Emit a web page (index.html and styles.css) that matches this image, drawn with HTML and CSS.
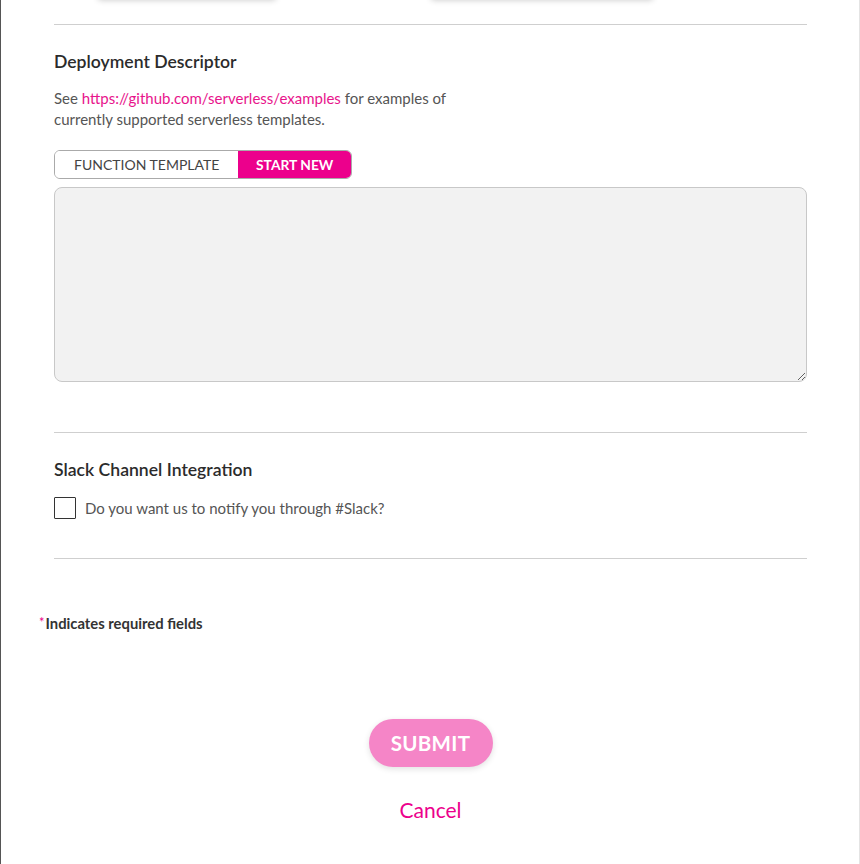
FILE: index.html
```html
<!DOCTYPE html>
<html>
<head>
<meta charset="utf-8">
<link rel="stylesheet" href="styles.css">
</head>
<body>
<div class="frame">
  <div class="cards">
    <div class="card card-a"></div>
    <div class="card card-b"></div>
  </div>
  <div class="section">
    <hr class="divider">
    <h2 class="heading">Deployment Descriptor</h2>
    <p class="desc">See <a class="link" href="#">https://github.com/serverless/examples</a> for examples of<br>currently supported serverless templates.</p>
    <div class="tabs">
      <button class="tab">FUNCTION TEMPLATE</button>
      <button class="tab tab-active">START NEW</button>
    </div>
    <textarea class="editor"></textarea>
    <hr class="divider divider-2">
    <h2 class="heading heading-slack">Slack Channel Integration</h2>
    <label class="check-row"><span class="checkbox"></span><span class="check-label">Do you want us to notify you through #Slack?</span></label>
    <hr class="divider divider-3">
  </div>
  <p class="required"><span class="star">*</span>Indicates required fields</p>
  <div class="actions">
    <button class="submit">SUBMIT</button>
    <a class="cancel" href="#">Cancel</a>
  </div>
</div>
</body>
</html>
```

FILE: styles.css
```css
html, body {
  margin: 0;
  padding: 0;
  background: #fff;
  height: 864px;
  overflow: hidden;
}
.frame {
  box-sizing: border-box;
  width: 860px;
  height: 864px;
  border-left: 1px solid #555;
  border-right: 1px solid #e4e4e4;
  font-family: Lato, "Open Sans", sans-serif;
  color: #333;
}
.cards {
  display: flex;
  height: 0;
  overflow: visible;
}
.card {
  height: 40px;
  margin-top: -41px;
  background: #fff;
  box-shadow: 0 1px 6px rgba(0,0,0,0.22);
  border-radius: 3px;
}
.card-a { width: 178px; margin-left: 97px; }
.card-b { width: 222px; margin-left: 155px; }
.section {
  padding: 0 52px 0 53px;
}
.divider {
  border: 0;
  border-top: 1px solid #cfcfcf;
  margin: 24px 0 0;
  height: 0;
}
.heading {
  margin: 26px 0 0;
  font-size: 17.6px;
  font-weight: 600;
  color: #2b2b2b;
  line-height: 22px;
}
.desc {
  margin: 15px 0 0;
  font-size: 15px;
  line-height: 21px;
  color: #555;
}
.link {
  color: #e8148c;
  text-decoration: none;
}
.tabs {
  display: flex;
  margin-top: 20px;
  width: 298px;
  height: 29px;
  border: 1px solid #aaa;
  border-radius: 6px;
  box-sizing: border-box;
  overflow: hidden;
}
.tab {
  font-family: Lato, sans-serif;
  font-size: 14px;
  border: 0;
  background: #fff;
  color: #444;
  padding: 0;
  height: 100%;
  width: 184px;
}
.tab-active {
  width: 113px;
  background: #ec008c;
  color: #fff;
  font-weight: 700;
  font-size: 13.8px;
}
.editor {
  display: block;
  box-sizing: border-box;
  width: 100%;
  height: 195px;
  margin-top: 8px;
  background: #f2f2f2;
  border: 1px solid #c8c8c8;
  border-radius: 8px;
  resize: vertical;
}
.divider-2 { margin-top: 50px; }
.heading-slack { margin-top: 26px; }
.check-row {
  display: flex;
  align-items: center;
  margin-top: 16px;
}
.checkbox {
  width: 20px;
  height: 20px;
  border: 1px solid #333;
  border-radius: 1px;
  background: #fff;
}
.check-label {
  margin-left: 9px;
  font-size: 15px;
  color: #555;
}
.divider-3 { margin-top: 39px; }
.required {
  margin: 55px 0 0 38px;
  font-size: 14.8px;
  font-weight: 700;
  color: #333;
}
.star {
  color: #ec008c;
  font-weight: 400;
  font-size: 13px;
  margin-right: 1px;
  vertical-align: 2px;
}
.actions {
  display: flex;
  flex-direction: column;
  align-items: center;
  margin-top: 87px;
  padding-left: 1px;
}
.submit {
  width: 124px;
  height: 48px;
  border: 0;
  border-radius: 24px;
  background: #f585c7;
  color: #fff;
  font-family: Lato, sans-serif;
  font-weight: 700;
  font-size: 20.5px;
  letter-spacing: 0.3px;
  box-shadow: 0 2px 6px rgba(0,0,0,0.12);
}
.cancel {
  margin-top: 30px;
  font-size: 21px;
  color: #ec008c;
  text-decoration: none;
}
```
